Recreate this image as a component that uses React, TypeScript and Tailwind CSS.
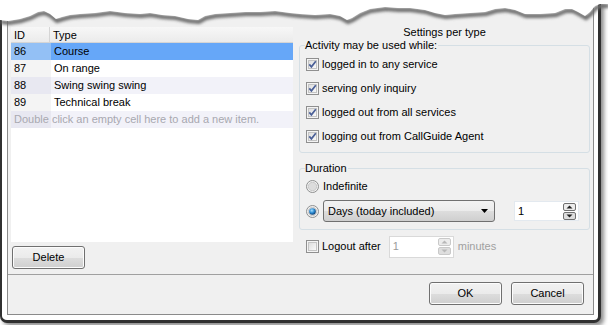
import type { ReactNode } from "react";

const rows = [
  { id: "86", type: "Course" },
  { id: "87", type: "On range" },
  { id: "88", type: "Swing swing swing" },
  { id: "89", type: "Technical break" },
];

const tear = [
  [0, 20], [8, 21], [20, 19], [30, 16], [38, 12], [44, 11], [50, 14], [56, 19], [62, 17], [70, 15],
  [80, 14], [95, 13], [110, 11], [125, 13], [140, 14], [150, 13], [162, 15], [175, 16], [188, 19],
  [198, 20], [205, 16], [215, 14], [230, 13], [245, 12], [260, 12], [275, 11], [290, 13], [300, 14],
  [315, 15], [330, 14], [340, 16], [347, 20], [352, 18], [360, 13], [370, 9], [385, 7], [398, 8],
  [410, 8], [425, 10], [435, 13], [445, 15], [455, 14], [470, 13], [485, 12], [495, 9], [505, 8],
  [515, 10], [525, 14], [540, 14], [555, 13], [565, 9], [572, 9], [578, 12], [585, 16], [590, 12],
  [595, 6], [600, 4], [608, 4],
];

function TornEdge() {
  const line = tear.map((p) => p.join(",")).join(" ");
  return (
    <svg className="absolute left-0 top-0" width="608" height="30" viewBox="0 0 608 30">
      <defs>
        <filter id="blur" x="-5%" y="-50%" width="110%" height="200%">
          <feGaussianBlur stdDeviation="1.4" />
        </filter>
      </defs>
      <polyline points={line} fill="none" stroke="#6b6b6b" strokeWidth="4" transform="translate(1,2)" filter="url(#blur)" />
      <polygon points={`0,0 ${line} 608,0`} fill="#ffffff" />
    </svg>
  );
}

function Check({ on = true }: { on?: boolean }) {
  return (
    <svg width="13" height="13" viewBox="0 0 13 13" className="shrink-0">
      <defs>
        <linearGradient id="cb" x1="0" y1="0" x2="1" y2="1">
          <stop offset="0" stopColor="#dcdcdc" />
          <stop offset="1" stopColor="#fbfbfb" />
        </linearGradient>
      </defs>
      <rect x="0.5" y="0.5" width="12" height="12" fill="#f4f4f4" stroke="#8f8f8f" />
      <rect x="2.5" y="2.5" width="8" height="8" fill="url(#cb)" stroke="#c4c4c4" />
      {on && <path d="M3.3 6.4 L5.4 8.8 L9.8 3.2" fill="none" stroke="#4a5f97" strokeWidth="1.7" />}
    </svg>
  );
}

function Radio({ on = false }: { on?: boolean }) {
  return (
    <svg width="13" height="13" viewBox="0 0 13 13" className="shrink-0">
      <defs>
        <radialGradient id="rb" cx="0.4" cy="0.35" r="0.6">
          <stop offset="0" stopColor="#a8e0ff" />
          <stop offset="0.6" stopColor="#2b8bd3" />
          <stop offset="1" stopColor="#144d85" />
        </radialGradient>
      </defs>
      <circle cx="6.5" cy="6.5" r="6" fill="#f2f2f2" stroke="#8e8f8f" />
      <circle cx="6.5" cy="6.5" r="4.2" fill="#dcdcdc" stroke="#c9c9c9" />
      {on && <circle cx="6.5" cy="6.5" r="3.3" fill="url(#rb)" />}
    </svg>
  );
}

function Spin({ disabled = false }: { disabled?: boolean }) {
  const c = disabled ? "#b8b8b8" : "#202020";
  const b = disabled ? "#c9c9c9" : "#707070";
  return (
    <div className="flex flex-col gap-[1px]">
      <svg width="13" height="8" viewBox="0 0 13 8">
        <rect x="0.5" y="0.5" width="12" height="7" rx="1.5" fill="#ececec" stroke={b} />
        <path d="M3.5 5.5 L6.5 2.5 L9.5 5.5 Z" fill={c} />
      </svg>
      <svg width="13" height="8" viewBox="0 0 13 8">
        <rect x="0.5" y="0.5" width="12" height="7" rx="1.5" fill="#dedede" stroke={b} />
        <path d="M3.5 2.5 L6.5 5.5 L9.5 2.5 Z" fill={c} />
      </svg>
    </div>
  );
}

function Btn({ children }: { children: ReactNode }) {
  return (
    <div className="w-[73px] h-[23px] rounded-[3px] border border-[#707070] bg-[linear-gradient(#f2f2f2_0%,#ebebeb_50%,#dddddd_51%,#cfcfcf_100%)] shadow-[inset_0_0_0_1px_#fcfcfc] flex items-center justify-center text-black">
      {children}
    </div>
  );
}

function Group({ title, className, children }: { title: string; className: string; children: ReactNode }) {
  return (
    <div className={`relative border border-[#d5dfe5] rounded-[3px] ${className}`}>
      <span className="absolute -top-[8px] left-[5px] bg-[#f0f0f0] pr-[1px] leading-[14px]">{title}</span>
      {children}
    </div>
  );
}

export default function App() {
  return (
    <div className="relative w-[608px] h-[325px] bg-white overflow-hidden font-['Liberation_Sans',Arial,sans-serif] text-[11px] text-black">
      <div className="w-[601px] h-[323px] bg-white border-l-2 border-r-[3px] border-b-[3px] border-[#303030] rounded-b-[7px] shadow-[3px_3px_4px_rgba(0,0,0,0.45)] pl-[5px] pr-[4px] pb-[5px]">
        <div className="h-full border-x border-b border-[#8a8a8a] bg-[#f0f0f0] flex flex-col">
          <div className="flex h-[274px]">
            <div className="w-[288px] pl-[3px] pt-[27px] flex flex-col">
              <div className="w-[282px] h-[215px] bg-white">
                <div className="flex h-[16px] leading-[16px] bg-[linear-gradient(#f7f7f7,#ebebeb)] border-b border-[#d5d5d5]">
                  <div className="w-[39px] pl-[3px] border-r border-[#d5d5d5]">ID</div>
                  <div className="pl-[3px]">Type</div>
                </div>
                {rows.map((r, i) => (
                  <div
                    key={r.id}
                    className={`flex h-[17px] leading-[17px] ${i === 0 ? "bg-[#66a7f8]" : i % 2 === 1 ? "bg-white" : "bg-[#f2f2f9]"}`}
                  >
                    <div className={`w-[40px] pl-[3px] ${i === 0 ? "bg-[#93c0f5]" : i % 2 === 1 ? "bg-[#f4f4f4]" : "bg-[#e8e8f1]"}`}>{r.id}</div>
                    <div className="pl-[3px]">{r.type}</div>
                  </div>
                ))}
                <div className="h-[17px] leading-[17px] pl-[3px] bg-[linear-gradient(90deg,#e8e8f1_40px,#f2f2f9_40px)] text-[#a8a8b0] whitespace-nowrap">
                  Double click an empty cell here to add a new item.
                </div>
              </div>
              <div className="mt-[4px] ml-[1px]">
                <Btn>Delete</Btn>
              </div>
            </div>
            <div className="flex-1 pl-[3px] pr-[3px] flex flex-col">
              <div className="text-center pt-[25px] leading-[14px]">Settings per type</div>
              <Group title="Activity may be used while:" className="mt-[6px] h-[108px] pl-[6px] pt-[6px]">
                {["logged in to any service", "serving only inquiry", "logged out from all services", "logging out from CallGuide Agent"].map((t) => (
                  <div key={t} className="flex items-center gap-[3px] h-[24px]">
                    <Check />
                    <span>{t}</span>
                  </div>
                ))}
              </Group>
              <Group title="Duration" className="mt-[15px] h-[62px] pl-[6px] pt-[9px]">
                <div className="flex items-center gap-[4px] h-[16px]">
                  <Radio />
                  <span>Indefinite</span>
                </div>
                <div className="flex items-center gap-[4px] mt-[6px]">
                  <Radio on />
                  <div className="w-[172px] h-[22px] rounded-[3px] border border-[#707070] bg-[linear-gradient(#f2f2f2_0%,#ebebeb_50%,#dddddd_51%,#cfcfcf_100%)] flex items-center pl-[4px] pr-[6px] justify-between">
                    <span>Days (today included)</span>
                    <svg width="7" height="4" viewBox="0 0 7 4">
                      <path d="M0 0 H7 L3.5 4 Z" fill="#000" />
                    </svg>
                  </div>
                  <div className="ml-[15px] w-[65px] h-[20px] bg-white border border-[#e3e9ef] flex items-center justify-between pl-[3px] pr-[2px]">
                    <span>1</span>
                    <Spin />
                  </div>
                </div>
              </Group>
              <div className="flex items-center mt-[5px] pl-[7px] h-[23px]">
                <Check on={false} />
                <span className="ml-[3px]">Logout after</span>
                <div className="ml-[8px] w-[65px] h-[22px] bg-white border border-[#d9d9d9] flex items-center justify-between pl-[3px] pr-[2px] text-[#9a9a9a]">
                  <span>1</span>
                  <Spin disabled />
                </div>
                <span className="ml-[4px] text-[#a0a0a0]">minutes</span>
              </div>
            </div>
          </div>
          <div className="border-t border-[#a0a0a0] flex-1 flex justify-end items-start gap-[9px] pt-[7px] pr-[9px]">
            <Btn>OK</Btn>
            <Btn>Cancel</Btn>
          </div>
        </div>
      </div>
      <TornEdge />
    </div>
  );
}
